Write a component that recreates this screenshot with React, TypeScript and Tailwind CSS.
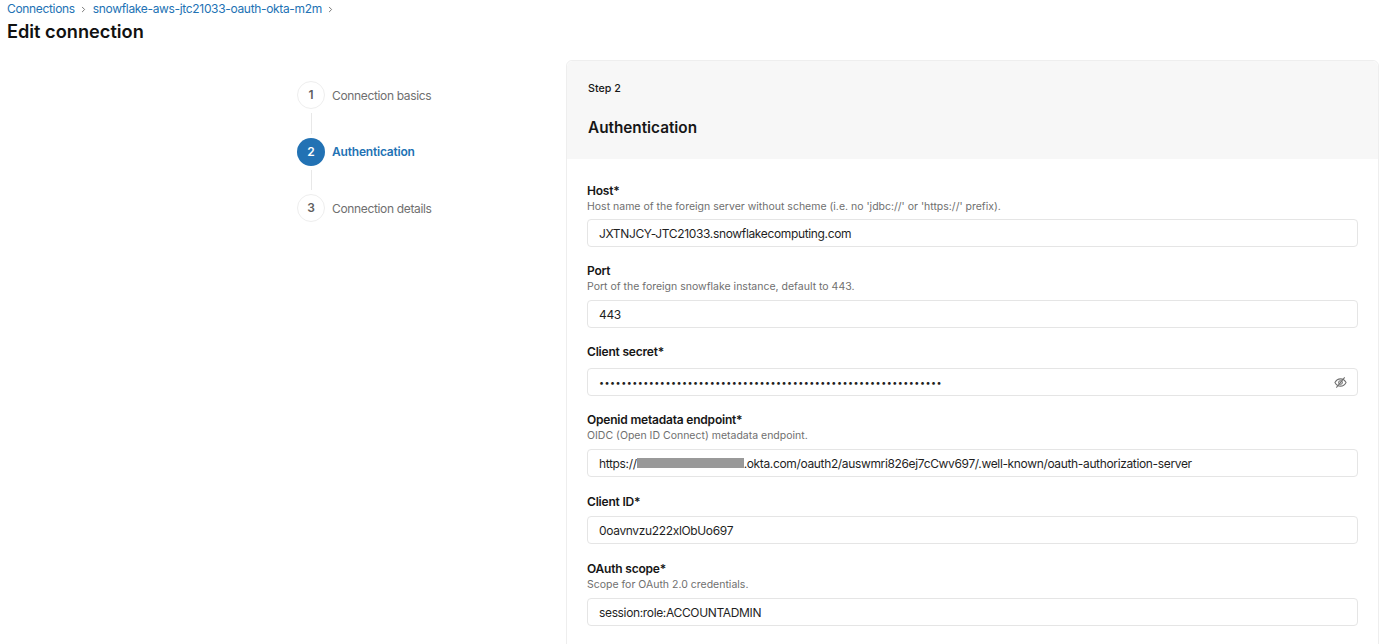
import { ChevronRight } from "lucide-react";

function Step({ n, label, active }: { n: number; label: string; active?: boolean }) {
  return (
    <div className="flex items-center gap-[7px] h-[28px]">
      <div
        className={
          active
            ? "w-[28px] h-[28px] rounded-full bg-[#2272b4] text-white flex items-center justify-center text-[12px] font-semibold"
            : "w-[28px] h-[28px] rounded-full border border-[#eeeeee] text-[#5f5f5f] flex items-center justify-center text-[12px] font-semibold"
        }
      >
        {n}
      </div>
      <span
        className={
          active
            ? "text-[12px] tracking-[-0.2px] font-semibold text-[#2272b4]"
            : "text-[12px] tracking-[-0.34px] text-[#6f6f6f] pt-px"
        }
      >
        {label}
      </span>
    </div>
  );
}

function Field({
  label,
  desc,
  children,
  className,
  gap,
}: {
  label: string;
  desc?: string;
  children: React.ReactNode;
  className: string;
  gap: string;
}) {
  return (
    <div className={className}>
      <div className="text-[12px] tracking-[-0.2px] leading-[16px] font-semibold text-[#161616]">{label}</div>
      {desc ? <div className="text-[10.5px] leading-[15px] text-[#6f6f6f]">{desc}</div> : null}
      <div className={gap}>{children}</div>
    </div>
  );
}

function Box({ children }: { children: React.ReactNode }) {
  return (
    <div className="h-[28px] w-[771px] flex items-center justify-between border border-[#e5e5e5] rounded-[4px] pl-[11px] pr-[10px] pt-[2px] text-[12px] tracking-[-0.35px] text-[#1f1f1f] whitespace-nowrap">
      {children}
    </div>
  );
}

export default function App() {
  return (
    <div className="h-[644px] w-[1400px] overflow-hidden bg-white font-['Inter',sans-serif]">
      <div className="pl-[7px] pt-px h-[17px] flex items-center text-[12px] tracking-[-0.33px] text-[#2272b4]">
        <span>Connections</span>
        <ChevronRight className="w-[9px] h-[9px] mx-[4.500px] text-[#6f6f6f]" strokeWidth={2.5} />
        <span>snowflake-aws-jtc21033-oauth-okta-m2m</span>
        <ChevronRight className="w-[9px] h-[9px] mx-[4.500px] text-[#6f6f6f]" strokeWidth={2.5} />
      </div>
      <h1 className="pl-[7px] mt-[2px] text-[18.2px] leading-[24px] font-semibold text-[#111111]">Edit connection</h1>
      <div className="flex mt-[17px]">
        <div className="ml-[297px] w-[269px] pt-[21px]">
          <Step n={1} label="Connection basics" />
          <div className="w-px h-[21px] bg-[#e8e8e8] ml-[14px] my-[4px]" />
          <Step n={2} label="Authentication" active />
          <div className="w-px h-[20px] bg-[#e8e8e8] ml-[14px] my-[4px]" />
          <Step n={3} label="Connection details" />
        </div>
        <div className="w-[813px] h-[600px] border border-[#eeeeee] rounded-t-[6px]">
          <div className="h-[98px] bg-[#f7f7f7] rounded-t-[6px] pl-[21px] pt-[21px]">
            <div className="text-[10.7px] leading-[14px] font-medium text-[#161616]">Step 2</div>
            <div className="mt-[21px] text-[15.3px] leading-[22px] font-semibold text-[#161616]">Authentication</div>
          </div>
          <div className="pl-[20px] pt-[24px]">
            <Field className="" gap="mt-[5px]" label="Host*" desc="Host name of the foreign server without scheme (i.e. no 'jdbc://' or 'https://' prefix).">
              <Box>JXTNJCY-JTC21033.snowflakecomputing.com</Box>
            </Field>
            <Field className="mt-[16px]" gap="mt-[6px]" label="Port" desc="Port of the foreign snowflake instance, default to 443.">
              <Box>443</Box>
            </Field>
            <Field className="mt-[16px]" gap="mt-[8px]" label="Client secret*">
              <Box>
                <span className="text-[9px] tracking-[0.47px]">{"•".repeat(62)}</span>
                <svg viewBox="0 0 14 14" className="w-[13px] h-[13px] mb-[2px] text-[#6f6f6f]" fill="none" stroke="currentColor" strokeWidth="1.1">
                  <path d="M1 7c1.4-2.6 3.4-3.9 6-3.9S11.6 4.400 13 7c-1.400 2.600-3.400 3.900-6 3.900S2.400 9.600 1 7z" />
                  <circle cx="7" cy="7" r="2" />
                  <path d="M2.500 12.500 11.500 1.500" />
                </svg>
              </Box>
            </Field>
            <Field className="mt-[16px]" gap="mt-[6px]" label="Openid metadata endpoint*" desc="OIDC (Open ID Connect) metadata endpoint.">
              <Box>
                <span className="flex items-center">
                  https://
                  <span className="inline-block w-[107px] h-[10px] mb-[2px] bg-[#999999]" />
                  .okta.com/oauth2/auswmri826ej7cCwv697/.well-known/oauth-authorization-server
                </span>
              </Box>
            </Field>
            <Field className="mt-[17px]" gap="mt-[6px]" label="Client ID*">
              <Box>0oavnvzu222xlObUo697</Box>
            </Field>
            <Field className="mt-[17px]" gap="mt-[6px]" label="OAuth scope*" desc="Scope for OAuth 2.0 credentials.">
              <Box>session:role:ACCOUNTADMIN</Box>
            </Field>
          </div>
        </div>
      </div>
    </div>
  );
}
